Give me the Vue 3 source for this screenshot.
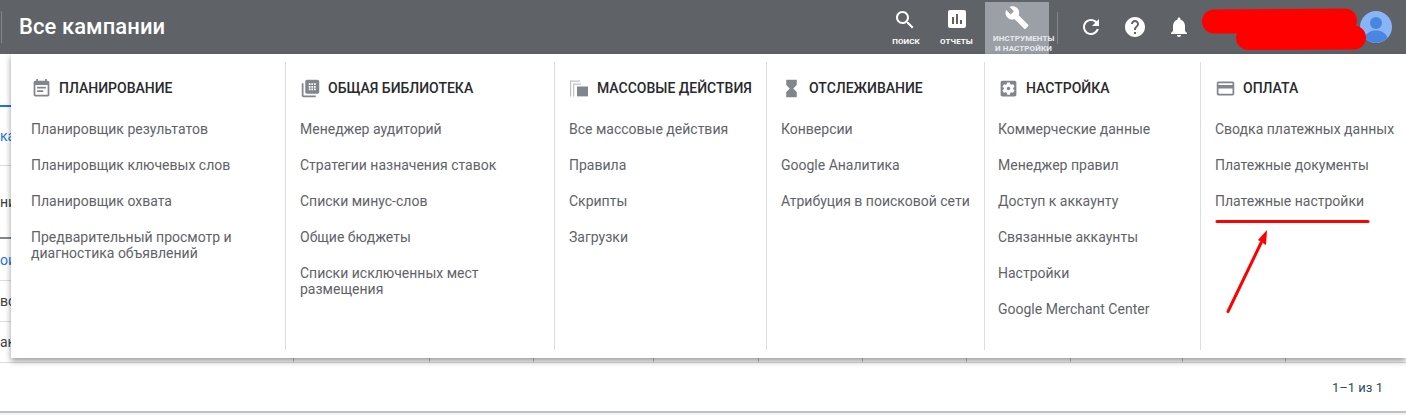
<script setup>
const icons = {
  note: 'M17 10H7v2h10v-2zm2-7h-1V1h-2v2H8V1H6v2H5c-1.11 0-1.99.9-1.99 2L3 19c0 1.1.89 2 2 2h14c1.1 0 2-.9 2-2V5c0-1.1-.9-2-2-2zm0 16H5V8h14v11zm-5-5H7v2h7v-2z',
  library: 'M4 6H2v14c0 1.1.9 2 2 2h14v-2H4V6zm16-4H8c-1.1 0-2 .9-2 2v12c0 1.1.9 2 2 2h12c1.1 0 2-.9 2-2V4c0-1.1-.9-2-2-2zM10 6h2v2h-2V6zm0 3h2v2h-2V9zm0 3h2v2h-2v-2zm3-6h2v2h-2V6zm0 3h2v2h-2V9zm0 3h2v2h-2v-2zm3-6h2v2h-2V6zm0 3h2v2h-2V9zm0 3h2v2h-2v-2z',
  bulk: 'M9.100 9.700h12.600V21H9.100z',
  hourglass: 'M6 2v6h.01L6 8.01 10 12l-4 4 .01.01H6V22h12v-5.99h-.01L18 16l-4-4 4-3.99-.01-.01H18V2H6z',
  settings: 'M12 10c-1.1 0-2 .9-2 2s.9 2 2 2 2-.9 2-2-.9-2-2-2zm7-7H5c-1.11 0-2 .9-2 2v14c0 1.1.89 2 2 2h14c1.11 0 2-.9 2-2V5c0-1.1-.89-2-2-2zm-1.75 9c0 .23-.02.46-.05.68l1.48 1.16c.13.11.17.3.08.45l-1.4 2.42c-.09.15-.27.21-.43.15l-1.74-.7c-.36.28-.76.51-1.18.69l-.26 1.85c-.03.17-.18.3-.35.3h-2.8c-.17 0-.32-.13-.35-.29l-.26-1.85c-.43-.18-.82-.41-1.18-.69l-1.74.7c-.16.06-.34 0-.43-.15l-1.4-2.42c-.09-.15-.05-.34.08-.45l1.48-1.16c-.03-.23-.05-.46-.05-.69 0-.23.02-.46.05-.68l-1.48-1.16c-.13-.11-.17-.3-.08-.45l1.4-2.42c.09-.15.27-.21.43-.15l1.74.7c.36-.28.76-.51 1.18-.69l.26-1.85c.03-.17.18-.3.35-.3h2.8c.17 0 .32.13.35.29l.26 1.85c.43.18.82.41 1.18.69l1.74-.7c.16-.06.34 0 .43.15l1.4 2.42c.09.15.05.34-.08.45l-1.48 1.16c.03.23.05.46.05.69z',
  card: 'M20 4H4c-1.11 0-1.99.89-1.99 2L2 18c0 1.11.89 2 2 2h16c1.11 0 2-.89 2-2V6c0-1.11-.89-2-2-2zm0 14H4v-6h16v6zm0-10H4V6h16v2z',
  search: 'M15.5 14h-.79l-.28-.27C15.41 12.59 16 11.11 16 9.5 16 5.91 13.09 3 9.5 3S3 5.91 3 9.5 5.91 16 9.5 16c1.61 0 3.09-.59 4.23-1.57l.27.28v.79l5 4.99L20.49 19l-4.99-5zm-6 0C7.01 14 5 11.99 5 9.5S7.01 5 9.5 5 14 7.01 14 9.5 11.99 14 9.5 14z',
  reports: 'M19 3H5c-1.1 0-2 .9-2 2v14c0 1.1.9 2 2 2h14c1.1 0 2-.9 2-2V5c0-1.1-.9-2-2-2zM9 17H7v-7h2v7zm4 0h-2V7h2v10zm4 0h-2v-4h2v4z',
  tools: 'M22.7 19l-9.1-9.1c.9-2.3.4-5-1.5-6.9-2-2-5-2.4-7.4-1.3L9 6 6 9 1.6 4.7C.4 7.1.9 10.1 2.9 12.1c1.9 1.9 4.6 2.4 6.9 1.5l9.1 9.1c.4.4 1 .4 1.4 0l2.3-2.3c.5-.4.5-1.1.1-1.4z',
  refresh: 'M17.65 6.35C16.2 4.9 14.21 4 12 4c-4.42 0-7.99 3.58-7.99 8s3.57 8 7.99 8c3.73 0 6.84-2.55 7.73-6h-2.08c-.82 2.33-3.04 4-5.65 4-3.31 0-6-2.69-6-6s2.69-6 6-6c1.66 0 3.14.69 4.22 1.78L13 11h7V4l-2.35 2.35z',
  help: 'M12 2C6.48 2 2 6.48 2 12s4.48 10 10 10 10-4.48 10-10S17.52 2 12 2zm1 17h-2v-2h2v2zm2.07-7.75l-.9.92C13.45 12.9 13 13.5 13 15h-2v-.5c0-1.1.45-2.1 1.17-2.83l1.24-1.26c.37-.36.59-.86.59-1.41 0-1.1-.9-2-2-2s-2 .9-2 2H8c0-2.21 1.79-4 4-4s4 1.79 4 4c0 .88-.36 1.68-.93 2.25z',
  bell: 'M12 22c1.1 0 2-.9 2-2h-4c0 1.1.89 2 2 2zm6-6v-5c0-3.07-1.64-5.64-4.5-6.32V4c0-.83-.67-1.5-1.5-1.5s-1.5.67-1.5 1.5v.68C7.63 5.36 6 7.92 6 11v5l-2 2v1h16v-1l-2-2z'
}

const columns = [
  {
    title: 'Планирование', icon: 'note', width: 275,
    items: ['Планировщик результатов', 'Планировщик ключевых слов', 'Планировщик охвата', 'Предварительный просмотр и диагностика объявлений']
  },
  {
    title: 'Общая библиотека', icon: 'library', width: 269,
    items: ['Менеджер аудиторий', 'Стратегии назначения ставок', 'Списки минус-слов', 'Общие бюджеты', 'Списки исключенных мест размещения']
  },
  {
    title: 'Массовые действия', icon: 'bulk', width: 212,
    items: ['Все массовые действия', 'Правила', 'Скрипты', 'Загрузки']
  },
  {
    title: 'Отслеживание', icon: 'hourglass', width: 218,
    items: ['Конверсии', 'Google Аналитика', 'Атрибуция в поисковой сети']
  },
  {
    title: 'Настройка', icon: 'settings', width: 216,
    items: ['Коммерческие данные', 'Менеджер правил', 'Доступ к аккаунту', 'Связанные аккаунты', 'Настройки', 'Google Merchant Center']
  },
  {
    title: 'Оплата', icon: 'card', width: 206,
    items: ['Сводка платежных данных', 'Платежные документы', 'Платежные настройки']
  }
]

// строки таблицы под меню, видны только слева
const rows = [
  { id: 'tabs', text: '', cls: 'tabs', height: 53 },
  { id: 'r1', text: 'ка', cls: 'link', height: 59 },
  { id: 'r2', text: 'ни', cls: 'head', height: 73 },
  { id: 'r3', text: 'ои', cls: 'link', height: 42 },
  { id: 'r4', text: 'вс', cls: '', height: 41 }
]

// ширины ячеек последней строки
const cellWidths = [294, 136, 104, 120, 105, 104, 104, 104, 112, 103, 120]
</script>

<template>
  <div class="page">
    <header class="topbar">
      <span class="top-divider"></span>
      <h1 class="page-title">Все кампании</h1>

      <nav class="top-nav">
        <div class="nav-btn search-btn">
          <svg class="nav-icon" viewBox="0 0 24 24"><path :d="icons.search" /></svg>
          <span class="nav-label">ПОИСК</span>
        </div>
        <div class="nav-btn reports-btn">
          <svg class="nav-icon" viewBox="0 0 24 24"><path :d="icons.reports" /></svg>
          <span class="nav-label">ОТЧЕТЫ</span>
        </div>
        <div class="nav-btn tools-btn">
          <svg class="nav-icon" viewBox="0 0 24 24"><path :d="icons.tools" /></svg>
          <span class="nav-label">ИНСТРУМЕНТЫ<br />И НАСТРОЙКИ</span>
        </div>
      </nav>
      <span class="nav-divider"></span>

      <svg class="action-icon" viewBox="0 0 24 24"><path :d="icons.refresh" /></svg>
      <svg class="action-icon" viewBox="0 0 24 24"><path :d="icons.help" /></svg>
      <svg class="action-icon" viewBox="0 0 24 24"><path :d="icons.bell" /></svg>

      <svg class="avatar" viewBox="0 0 32 32">
        <circle cx="16" cy="16" r="16" fill="#8ab4f8" />
        <circle cx="16" cy="12" r="6" fill="#4a86e0" />
        <path d="M4.5 27c1.5-5 6-7.500 11.500-7.500s10 2.500 11.500 7.500a16 16 0 0 1-23 0z" fill="#4a86e0" />
      </svg>
    </header>

    <section class="table">
      <div v-for="row in rows" :key="row.id" class="table-row" :class="row.cls" :style="{ height: row.height + 'px' }">
        {{ row.text }}
      </div>
      <div class="table-row last-row">
        <div v-for="(w, i) in cellWidths" :key="i" class="cell" :style="{ width: w + 'px' }">{{ i === 0 ? 'ак' : '' }}</div>
      </div>
    </section>

    <footer class="pager">1–1 из 1</footer>

    <div class="menu">
      <div v-for="col in columns" :key="col.title" class="menu-col" :style="{ width: col.width + 'px' }">
        <div class="col-head">
          <svg class="col-icon" viewBox="0 0 24 24">
            <path v-if="col.icon === 'bulk'" class="bulk-back" d="M1.100 2.900h11.500v1.400H2.500V21H1.100zM4.600 6.300h9.100v1.400H6V21H4.600z" />
            <path :d="icons[col.icon]" fill-rule="evenodd" />
          </svg>
          <span>{{ col.title }}</span>
        </div>
        <a v-for="item in col.items" :key="item" class="col-item">{{ item }}</a>
      </div>
    </div>

    <!-- красные пометки поверх скриншота -->
    <svg class="marks" width="1406" height="415" viewBox="0 0 1406 415">
      <path d="M1214 21.500L1345 20.500M1248 38L1354 37.500" stroke="#f00" stroke-width="24" stroke-linecap="round" fill="none" />
      <path d="M1217 221.500H1368" stroke="#f00" stroke-width="3" stroke-linecap="round" fill="none" />
      <path d="M1228 311.500L1261 243" stroke="#f00" stroke-width="3" stroke-linecap="round" fill="none" />
      <path d="M1267 230L1266 245L1258 240z" fill="#f00" />
    </svg>
  </div>
</template>

<style>
html, body {
  margin: 0;
  overflow: hidden;
}
</style>

<style scoped>
.page {
  position: relative;
  width: 1406px;
  height: 415px;
  background: #f1f3f4;
  overflow: hidden;
  font-family: Roboto, "Liberation Sans", sans-serif;
}

.topbar {
  display: flex;
  align-items: center;
  height: 54px;
  background: #5f6368;
  color: #fff;
}

.top-divider {
  width: 1px;
  height: 32px;
  margin: 0 0 0 1px;
  background: #80868b;
}

.page-title {
  margin: 0 0 0 17px;
  font-size: 22px;
  font-weight: 500;
  line-height: 28px;
  letter-spacing: 0.08px;
}

.top-nav {
  display: flex;
  align-self: stretch;
  margin-left: auto;
}

.nav-btn {
  display: flex;
  flex-direction: column;
  align-items: center;
  box-sizing: border-box;
  padding-top: 8px;
}

.search-btn {
  width: 48px;
}

.search-btn .nav-label {
  margin-left: 2px;
}

.reports-btn {
  width: 55px;
  padding-top: 7px;
}

.tools-btn {
  width: 64px;
  margin: 2px 0 0 1px;
  padding-top: 3px;
  background: #9aa0a6;
}

.nav-icon {
  width: 24px;
  height: 24px;
  fill: #fff;
}

.tools-btn .nav-icon {
  width: 26px;
  height: 26px;
}

.nav-label {
  margin-top: 4px;
  font-size: 8px;
  line-height: 11px;
  font-weight: 700;
  letter-spacing: 0.1px;
  text-align: center;
  white-space: nowrap;
}

.reports-btn .nav-label {
  margin-top: 5px;
}

.tools-btn .nav-label {
  width: 61px;
  margin: 4px 0 0 13px;
  line-height: 10px;
  color: #e8eaed;
}

.nav-divider {
  width: 1px;
  height: 32px;
  margin: 2px 21px 0 8px;
  background: #80868b;
}

.action-icon {
  flex: none;
  width: 24px;
  height: 24px;
  margin-right: 20px;
  fill: #fff;
}

.avatar {
  width: 32px;
  height: 32px;
  margin: 0 14px 0 149px;
}

.table {
  background: #fff;
}

.table-row {
  display: flex;
  align-items: center;
  box-sizing: border-box;
  border-bottom: 1px solid #dadce0;
  font-size: 14px;
  line-height: 16px;
  color: #3c4043;
}

.tabs {
  border-bottom: 2px solid #1a73e8;
}

.head {
  border-bottom: 2px solid #80868b;
}

.link {
  color: #1a73e8;
}

.last-row {
  height: 41px;
  align-items: stretch;
}

.cell {
  display: flex;
  align-items: center;
  box-sizing: border-box;
  flex: none;
  border-right: 1px solid #bdc1c6;
}

.cell:last-child {
  border-right: 0;
}

.pager {
  display: flex;
  justify-content: flex-end;
  align-items: center;
  height: 48px;
  padding-right: 23px;
  background: #fff;
  border-bottom: 2px solid #bdc1c6;
  font-size: 13px;
  color: #33475b;
}

.menu {
  position: absolute;
  top: 54px;
  left: 11px;
  right: 0;
  display: flex;
  box-sizing: border-box;
  height: 304px;
  padding: 8px 0;
  background: #fff;
  box-shadow: 0 3px 6px rgba(0, 0, 0, 0.4);
}

.menu-col {
  box-sizing: border-box;
  flex: none;
  padding: 0 5px 0 14px;
  border-right: 1px solid #dadce0;
}

.menu-col:first-child {
  padding-left: 20px;
}

.menu-col:nth-child(5) {
  padding-left: 13px;
}

.menu-col:last-child {
  border-right: 0;
}

.col-head {
  display: flex;
  align-items: center;
  gap: 7px;
  height: 24px;
  margin: 14px 0 21px;
  font-size: 14px;
  font-weight: 500;
  color: #28292c;
  text-transform: uppercase;
  white-space: nowrap;
}

.col-icon {
  flex: none;
  width: 21px;
  height: 21px;
  fill: #80868b;
}

.bulk-back {
  fill: #bdc1c6;
}

.col-item {
  display: block;
  margin-bottom: 20px;
  font-size: 14px;
  line-height: 16px;
  color: #5f6368;
}

.marks {
  position: absolute;
  top: 0;
  left: 0;
  pointer-events: none;
}
</style>
